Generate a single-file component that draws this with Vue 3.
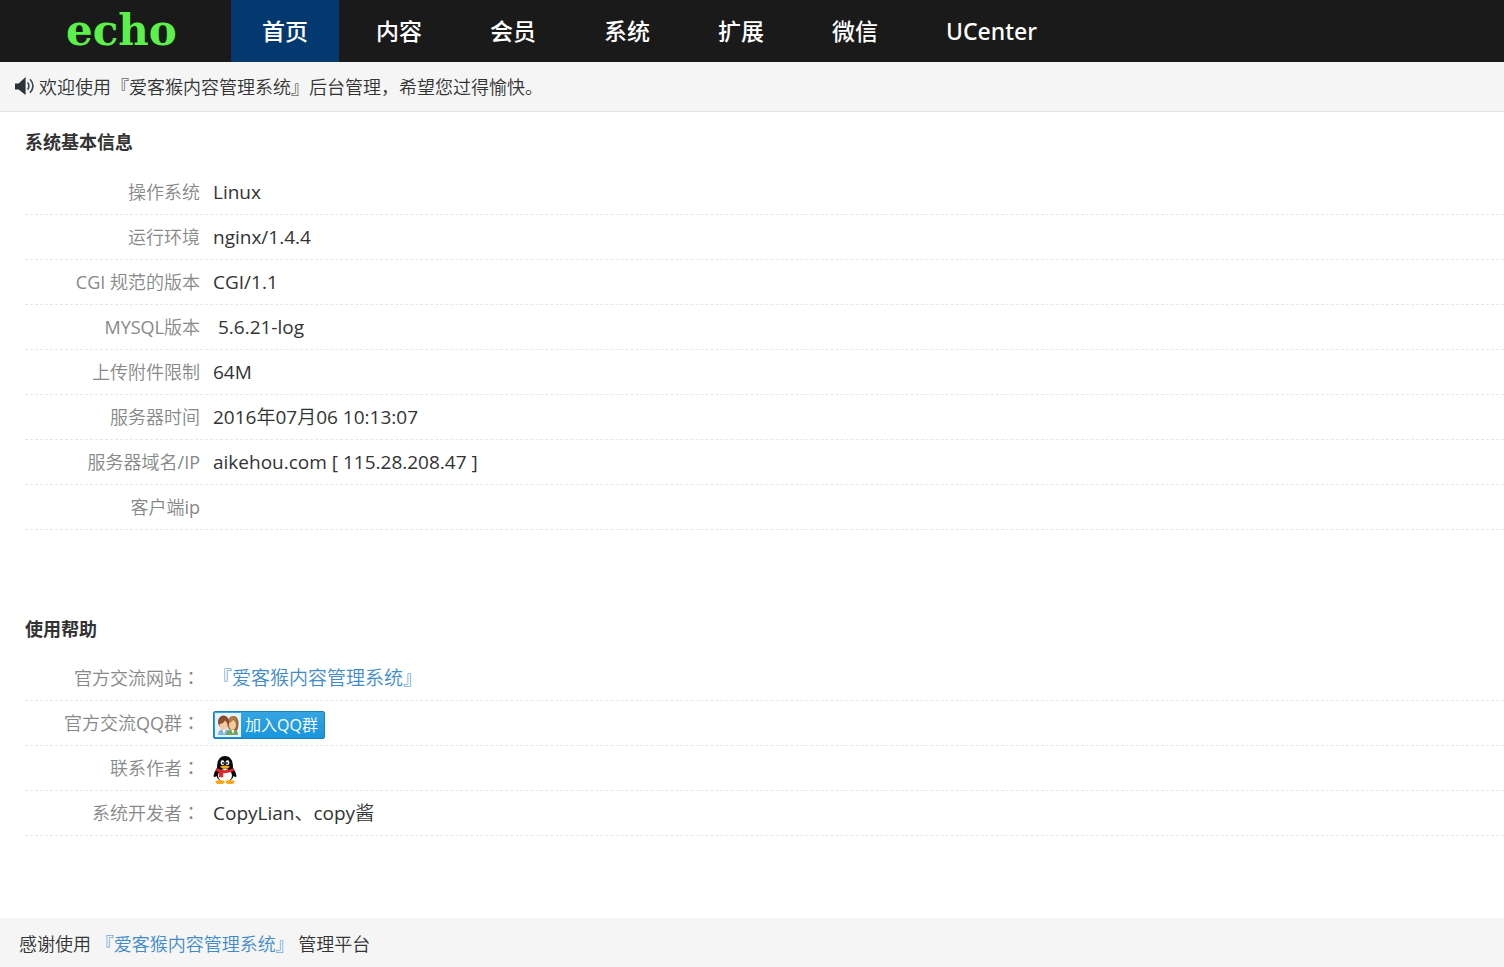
<script setup>
const nav = ['首页', '内容', '会员', '系统', '扩展', '微信', 'UCenter']
const system = [
  { label: '操作系统', value: 'Linux' },
  { label: '运行环境', value: 'nginx/1.4.4' },
  { label: 'CGI 规范的版本', value: 'CGI/1.1' },
  { label: 'MYSQL版本', value: '\u00a05.6.21-log' },
  { label: '上传附件限制', value: '64M' },
  { label: '服务器时间', value: '2016年07月06 10:13:07' },
  { label: '服务器域名/IP', value: 'aikehou.com [ 115.28.208.47 ]' },
  { label: '客户端ip', value: '' },
]
</script>

<template>
  <div class="page">
    <header class="topbar">
      <a class="logo" href="#">echo</a>
      <nav class="nav">
        <a v-for="(item, i) in nav" :key="item" href="#" :class="{ active: i === 0 }">{{ item }}</a>
      </nav>
    </header>

    <div class="notice">
      <svg class="speaker" viewBox="0 0 20 20" width="20" height="20" aria-hidden="true">
        <path d="M0 6.400h3.600L10.600 0v18L3.600 12.400H0z" fill="#2b333b" />
        <path d="M12.600 5.400q2.600 3.600 0 7.200M15 2.200q6 6.800 0 13.600" fill="none" stroke="#3c444b" stroke-width="1.600" />
      </svg>
      <span>欢迎使用『爱客猴内容管理系统』后台管理，希望您过得愉快。</span>
    </div>

    <main class="content">
      <section class="panel">
        <h2>系统基本信息</h2>
        <dl>
          <div v-for="row in system" :key="row.label" class="row">
            <dt>{{ row.label }}</dt>
            <dd>{{ row.value }}</dd>
          </div>
        </dl>
      </section>

      <section class="panel">
        <h2>使用帮助</h2>
        <dl>
          <div class="row">
            <dt>官方交流网站<span class="colon">：</span></dt>
            <dd><a href="#">『爱客猴内容管理系统』</a></dd>
          </div>
          <div class="row">
            <dt>官方交流QQ群<span class="colon">：</span></dt>
            <dd>
              <a class="join" href="#">
                <svg viewBox="0 0 26 24" width="26" height="24" aria-hidden="true">
                  <rect width="26" height="24" fill="#e6f3fb" />
                  <path d="M3 22q0-6 6-6t7 6z" fill="#7fb2dc" />
                  <path d="M11 22q1-6 7-6 5 0 5 6z" fill="#6fa55c" />
                  <path d="M7 16l2 5 2-5zM16 16l2 5 2-5z" fill="#fff" />
                  <path d="M12.500 12q0-9 6-9 5 0 5 8 0 5-2 7l-8-2z" fill="#9a6433" />
                  <ellipse cx="17.500" cy="12" rx="3.500" ry="5" fill="#f2c9a0" />
                  <path d="M13.500 10q4-1 5-4 1 3 3 4V6l-4-3-4 3z" fill="#b47a42" />
                  <ellipse cx="8.500" cy="9" rx="5.500" ry="6.500" fill="#80452c" />
                  <ellipse cx="8.500" cy="12" rx="4" ry="5" fill="#f4c8a3" />
                  <path d="M4 11q5 0 6-4 1 2 3 4V7L9 4 4 7z" fill="#8d5033" />
                </svg>
                <span>加入QQ群</span>
              </a>
            </dd>
          </div>
          <div class="row">
            <dt>联系作者<span class="colon">：</span></dt>
            <dd>
              <a class="penguin" href="#" aria-label="QQ">
                <svg viewBox="0 0 24 28" width="24" height="28" aria-hidden="true">
                  <path d="M4 12Q4 0 12 0t8 12q3 4 3.500 8-.5 2-3 0-1 5-8.500 6-7.500-1-8.500-6-2.500 2-3 0Q1 16 4 12z" fill="#080808" />
                  <ellipse cx="12" cy="19.500" rx="7" ry="6.500" fill="#fff" />
                  <ellipse cx="7" cy="26" rx="4.500" ry="2" fill="#f9a61a" />
                  <ellipse cx="17" cy="26" rx="4.500" ry="2" fill="#f9a61a" />
                  <ellipse cx="9.500" cy="6.700" rx="1.900" ry="2.400" fill="#fff" />
                  <ellipse cx="14.500" cy="6.700" rx="1.900" ry="2.400" fill="#fff" />
                  <circle cx="10" cy="7" r="0.900" fill="#000" />
                  <circle cx="14" cy="7" r="0.900" fill="#000" />
                  <path d="M7 10.500q5-2 10 0-2 2.500-5 2.500t-5-2.500z" fill="#f6a91b" />
                  <path d="M3.500 12q8.500 4.500 17 0l.7 2.800q-5 2.700-11 2.400v4H6v-5l-3-1.500z" fill="#e0262a" />
                </svg>
              </a>
            </dd>
          </div>
          <div class="row">
            <dt>系统开发者<span class="colon">：</span></dt>
            <dd>CopyLian、copy酱</dd>
          </div>
        </dl>
      </section>
    </main>

    <footer class="footer">
      感谢使用 <a href="#">『爱客猴内容管理系统』</a> 管理平台
    </footer>
  </div>
</template>

<style>
body {
  margin: 0;
  background: #fff;
}
</style>

<style scoped>
.page {
  display: flex;
  flex-direction: column;
  min-height: 100vh;
  color: #333;
  font-family: "Open Sans", "Noto Sans CJK SC DemiLight", "Noto Sans CJK SC", sans-serif;
  font-size: 18px;
  line-height: 24px;
}
a {
  color: #428bca;
  text-decoration: none;
}
.topbar {
  display: flex;
  height: 62px;
  background: #1a1a1a;
}
.logo {
  box-sizing: border-box;
  flex: none;
  width: 231px;
  padding-left: 66px;
  color: #5bf04a;
  font-family: "DejaVu Serif", serif;
  font-size: 42px;
  font-weight: 700;
  line-height: 62px;
}
.nav {
  display: flex;
  gap: 6px;
}
.nav a {
  padding: 0 31px;
  color: #fff;
  font-family: "Noto Sans", "Noto Sans CJK SC", sans-serif;
  font-size: 23px;
  font-weight: 500;
  line-height: 62px;
  white-space: nowrap;
}
.nav a.active {
  background: #04396f;
}
.notice {
  display: flex;
  align-items: center;
  gap: 4px;
  height: 49px;
  padding-left: 15px;
  border-bottom: 1px solid #e3e3e3;
  background: #f5f5f5;
}
.speaker {
  flex: none;
}
.content {
  flex: 1;
  padding-left: 25px;
}
.panel {
  padding-bottom: 82px;
}
h2 {
  margin: 0;
  padding: 18px 0 16px;
  font-family: "Open Sans", "Noto Sans CJK SC", sans-serif;
  font-size: 18px;
  font-weight: 700;
  line-height: 24px;
}
.panel + .panel h2 {
  padding: 5px 0 15px;
}
dl {
  margin: 0;
}
.row {
  display: grid;
  grid-template-columns: 175px 1fr;
  column-gap: 13px;
  align-items: center;
  height: 44px;
  border-bottom: 1px dashed #e8e8e8;
}
dt {
  color: #888;
  text-align: right;
  white-space: nowrap;
}
dd {
  margin: 0;
  font-size: 19px;
}
.colon {
  font-family: "Noto Sans CJK TC", sans-serif;
  line-height: 1;
}
.join {
  box-sizing: border-box;
  display: flex;
  align-items: center;
  gap: 4px;
  width: 112px;
  height: 28px;
  margin-top: 4px;
  padding-left: 1px;
  border: 1px solid #2180b8;
  border-radius: 2px;
  background: linear-gradient(#35a5e2, #1795db);
  color: #fff;
  font-size: 16px;
  white-space: nowrap;
}
.penguin {
  display: block;
  height: 28px;
  margin-top: 4px;
}
.penguin svg {
  display: block;
}
.footer {
  padding: 14px 19px 11px;
  background: #f5f5f5;
}
</style>
